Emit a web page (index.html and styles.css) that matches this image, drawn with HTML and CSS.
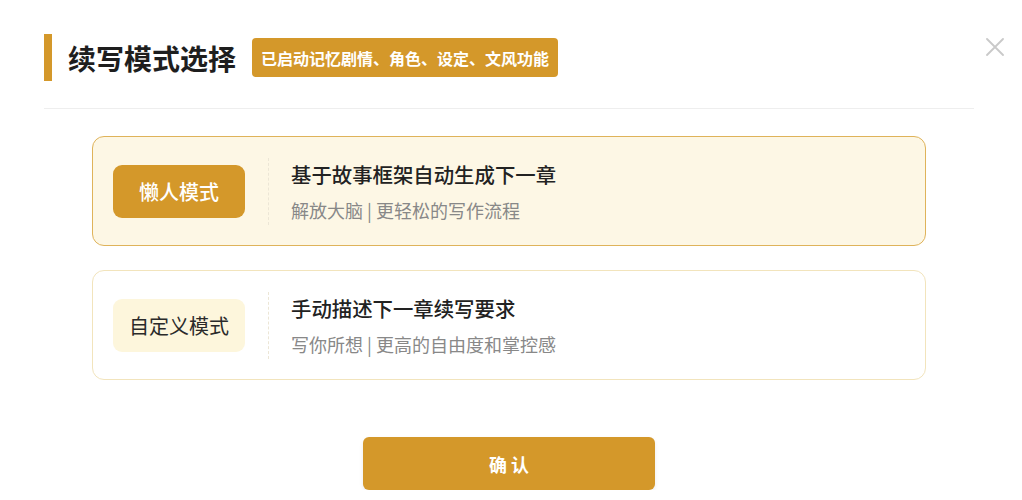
FILE: index.html
```html
<!DOCTYPE html>
<html lang="zh-CN">
<head>
<meta charset="utf-8">
<title>续写模式选择</title>
<link rel="stylesheet" href="styles.css">
</head>
<body>
<div class="modal">
  <button class="close" aria-label="关闭">
    <svg width="18" height="18" viewBox="0 0 18 18"><path d="M1 1L17 17M17 1L1 17" stroke="#c9c9c9" stroke-width="1.8" fill="none" stroke-linecap="round"/></svg>
  </button>
  <div class="header">
    <span class="accent"></span>
    <h1 class="title">续写模式选择</h1>
    <span class="badge">已启动记忆剧情、角色、设定、文风功能</span>
  </div>
  <div class="divider"></div>
  <div class="options">
    <div class="card card-active">
      <div class="mode mode-active">懒人模式</div>
      <div class="sep"></div>
      <div class="info">
        <div class="info-title">基于故事框架自动生成下一章</div>
        <div class="info-sub">解放大脑 | 更轻松的写作流程</div>
      </div>
    </div>
    <div class="card">
      <div class="mode">自定义模式</div>
      <div class="sep"></div>
      <div class="info">
        <div class="info-title">手动描述下一章续写要求</div>
        <div class="info-sub">写你所想 | 更高的自由度和掌控感</div>
      </div>
    </div>
  </div>
  <div class="actions">
    <button class="confirm">确 认</button>
  </div>
</div>
</body>
</html>
```
FILE: styles.css
```css
* { box-sizing: border-box; }
html, body { margin: 0; padding: 0; background: #fff; }
body {
  font-family: "Noto Sans CJK SC", "Noto Sans", sans-serif;
  color: #222;
}
.modal {
  position: relative;
  width: 1018px;
  padding: 34px 44px 0;
}
.close {
  position: absolute;
  top: 38px;
  right: 14px;
  border: 0;
  background: none;
  padding: 0;
  width: 18px;
  height: 18px;
  cursor: pointer;
}
.header {
  display: flex;
  align-items: center;
  height: 47px;
}
.accent {
  width: 8px;
  height: 47px;
  background: #d4982a;
  margin-right: 16px;
}
.title {
  margin: 0;
  font-size: 28px;
  font-weight: 700;
  line-height: 40px;
  color: #1e1e1e;
}
.badge {
  margin-left: 16px;
  height: 39px;
  padding: 0 9px;
  display: flex;
  align-items: center;
  background: #d4982a;
  color: #fff;
  font-size: 16px;
  font-weight: 700;
  border-radius: 4px;
}
.divider {
  margin-top: 27px;
  border-top: 1px solid #eeeeee;
}
.options {
  margin-top: 27px;
  padding: 0 48px;
  display: flex;
  flex-direction: column;
  gap: 24px;
}
.card {
  height: 110px;
  border: 1px solid #f2e4bc;
  border-radius: 12px;
  background: #fff;
  display: flex;
  align-items: center;
  padding: 0 20px;
}
.card-active {
  background: #fdf7e5;
  border-color: #dfb35a;
}
.mode {
  width: 132px;
  height: 53px;
  border-radius: 9px;
  background: #fdf6dc;
  color: #2a2a2a;
  font-size: 20px;
  display: flex;
  align-items: center;
  justify-content: center;
}
.mode-active {
  background: #d4982a;
  color: #fff;
  font-weight: 500;
}
.sep {
  width: 0;
  height: 67px;
  border-left: 1px dashed #ece6d6;
  margin: 0 22px 0 23px;
}
.info-title {
  font-size: 20.4px;
  font-weight: 500;
  line-height: 28px;
  color: #222;
}
.info-sub {
  margin-top: 10px;
  font-size: 18px;
  line-height: 24px;
  color: #888;
}
.actions {
  margin-top: 57px;
  display: flex;
  justify-content: center;
}
.confirm {
  width: 292px;
  height: 53px;
  border: 0;
  border-radius: 6px;
  background: #d4982a;
  color: #fff;
  font-family: inherit;
  font-size: 18px;
  font-weight: 700;
  box-shadow: 0 2px 4px rgba(0,0,0,0.08);
}
```
